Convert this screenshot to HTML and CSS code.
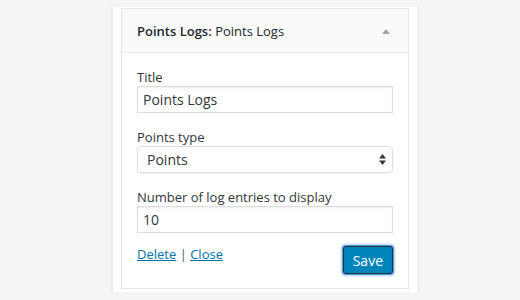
FILE: index.html
```html
<!DOCTYPE html>
<html lang="en">
<head>
    <meta charset="UTF-8">
    <title>Points Logs Widget</title>
    <link rel="stylesheet" href="styles.css">
</head>
<body>

    <!-- Sidebar column that holds the widget -->
    <div class="sidebar">
        <div class="widget">
            <div class="widget-top">
                <h3 class="widget-title"><strong>Points Logs:</strong> Points Logs</h3>
                <svg class="toggle" width="8" height="5" viewBox="0 0 8 5"><path d="M0 5 L4 0 L8 5 Z" fill="#a0a5aa"/></svg>
            </div>

            <div class="widget-inside">
                <div class="field">
                    <label for="title">Title</label>
                    <input type="text" id="title" value="Points Logs">
                </div>

                <div class="field">
                    <label for="type">Points type</label>
                    <div class="select-wrap">
                        <select id="type">
                            <option>Points</option>
                        </select>
                        <!-- up/down arrows of the select box -->
                        <svg class="select-arrows" width="7" height="11" viewBox="0 0 7 11">
                            <path d="M0 4.5 L3.5 0 L7 4.5 Z M0 6.5 L3.5 11 L7 6.5 Z" fill="#32373c"/>
                        </svg>
                    </div>
                </div>

                <div class="field">
                    <label for="number">Number of log entries to display</label>
                    <input type="text" id="number" value="10">
                </div>

                <div class="widget-actions">
                    <div class="links">
                        <a href="#">Delete</a> | <a href="#">Close</a>
                    </div>
                    <button class="button-primary">Save</button>
                </div>
            </div>
        </div>
    </div>

</body>
</html>
```

FILE: styles.css
```css
/* General page styling */
body {
    margin: 0;
    background-color: #f5f5f5;
    font-family: "Open Sans", "Liberation Sans", sans-serif;
    font-size: 13px;
    color: #32373c;
}

/* --- Sidebar column --- */
.sidebar {
    width: 288px;
    margin: 7px 0 0 113px;
    padding: 1px 8px 3px 8px;
    background-color: #fff;
    box-shadow: -3px 0 0 #ededed, 3px 0 0 #ededed;
}

/* --- Widget box --- */
.widget {
    border: 1px solid #e5e5e5;
    background-color: #fff;
}

.widget-top {
    display: flex;
    justify-content: space-between;
    align-items: center;
    height: 43px;
    padding: 0 18px 0 15px;
    background-color: #fafafa;
    border-bottom: 1px solid #e8e8e8;
}

.widget-title {
    margin: 0;
    font-size: 13px;
    font-weight: normal;
    color: #23282d;
}

.widget-title strong {
    font-weight: 600;
}

.toggle {
    margin-top: 1px;
}

.widget-inside {
    padding: 15px 15px 14px 15px;
}

/* --- Form fields --- */
.field {
    margin-bottom: 15px;
}

.field label {
    display: block;
    line-height: 18px;
    color: #32373c;
}

.field input,
.field select {
    display: block;
    box-sizing: border-box;
    width: 100%;
    height: 27px;
    margin: 0;
    padding: 0 5px;
    font-family: inherit;
    font-size: 14px;
    color: #32373c;
    background-color: #fff;
    border: 1px solid #ddd;
    box-shadow: inset 0 1px 2px rgba(0, 0, 0, 0.07);
    outline: none;
}

.select-wrap {
    position: relative;
}

.field select {
    -webkit-appearance: none;
    appearance: none;
    padding-left: 9px;
    border-radius: 4px;
    box-shadow: 0 1px 1px rgba(0, 0, 0, 0.04);
}

.select-arrows {
    position: absolute;
    right: 7px;
    top: 8px;
}

/* --- Bottom row: links and save button --- */
.widget-actions {
    display: flex;
    justify-content: space-between;
    align-items: flex-start;
    margin-top: -3px;
}

.links {
    line-height: 18px;
    color: #555d66;
}

.links a {
    color: #0073aa;
}

.button-primary {
    height: 28px;
    margin-top: 1px;
    padding: 0 9px;
    font-family: inherit;
    font-size: 14px;
    color: #fff;
    background-color: #0085ba;
    border: 1px solid #1c2f3c;
    border-radius: 3px;
    box-shadow: 0 0 0 1px #5b9dd9, 0 0 3px 1px rgba(30, 140, 190, 0.8);
}
```
